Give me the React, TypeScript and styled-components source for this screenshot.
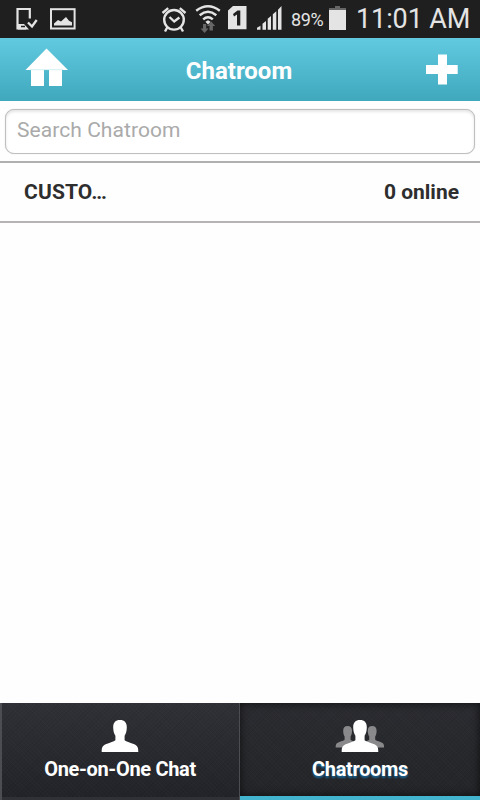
import React from "react";
import styled, { createGlobalStyle } from "styled-components";

const GlobalStyle = createGlobalStyle`
  * { box-sizing: border-box; }
  body { margin: 0; background: #fff; font-family: Roboto, sans-serif; }
`;

const Screen = styled.div`
  width: 480px;
  height: 800px;
  display: flex;
  flex-direction: column;
  overflow: hidden;
  background: #fefefe;
`;

const StatusBar = styled.div`
  height: 38px;
  flex: none;
  display: flex;
  justify-content: space-between;
  padding: 0 10px 0 14px;
  background: #1f1f1f;
  color: #e4e4e4;
`;

const StatusGroup = styled.div<{ $gap: number }>`
  display: flex;
  gap: ${(p) => p.$gap}px;
`;

const Glyph = styled.svg`
  display: block;
  flex: none;
  overflow: visible;
`;

const BatteryLevel = styled.span`
  width: 29px;
  font-size: 18px;
  line-height: 39px;
  letter-spacing: -0.35px;
  white-space: nowrap;
`;

const Clock = styled.span`
  width: 114px;
  margin-left: 1px;
  font-size: 27px;
  line-height: 38px;
  letter-spacing: -0.1px;
  white-space: nowrap;
`;

const Header = styled.header`
  height: 63px;
  flex: none;
  display: grid;
  grid-template-columns: 72px 1fr 72px;
  align-items: start;
  background: linear-gradient(#62cae0, #40a8bd);
  color: #fff;
`;

const Title = styled.h1`
  margin: 0;
  padding-right: 2px;
  text-align: center;
  font-size: 24px;
  font-weight: 700;
  line-height: 66px;
`;

const IconButton = styled.button`
  display: block;
  width: 72px;
  height: 63px;
  padding: 0;
  border: 0;
  background: none;
`;

const SearchArea = styled.div`
  flex: none;
  height: 60px;
  padding: 8px 5px 0;
`;

const SearchInput = styled.input`
  display: block;
  width: 470px;
  height: 45px;
  padding: 0 11px 3px;
  border: 1px solid #c0bebf;
  border-radius: 9px;
  outline: 0;
  background: #fff;
  box-shadow: inset 0 2px 3px #e6e6e6, 0 0 1px #c8c6c7;
  font: 400 21px Roboto, sans-serif;
  letter-spacing: 0.06px;
  &::placeholder { color: #aaa; opacity: 1; }
`;

const RoomList = styled.main`
  flex: 1;
  border-top: 2px solid #b0b0b0;
`;

const RoomRow = styled.div`
  height: 60px;
  display: flex;
  justify-content: space-between;
  padding: 0 21px 0 24px;
  border-bottom: 2px solid #b6b4b5;
  color: #2e2e2e;
  font-size: 21px;
  font-weight: 700;
  line-height: 58px;
`;

const RoomName = styled.span`
  width: 100px;
  letter-spacing: 0.15px;
`;

const OnlineCount = styled.span`
  white-space: nowrap;
`;

const TabBar = styled.nav`
  height: 97px;
  flex: none;
  display: grid;
  grid-template-columns: 1fr 1fr;
`;

const Tab = styled.button<{ $active?: boolean }>`
  display: flex;
  flex-direction: column;
  align-items: center;
  padding: ${(p) => (p.$active ? "16px 0 0" : "16px 1px 0 0")};
  border: 0 solid #4c4d52;
  border-width: ${(p) => (p.$active ? "0 0 4px" : "0 1px 0 2px")};
  border-bottom-color: #43b4cd;
  background:
    repeating-linear-gradient(45deg, rgba(255, 255, 255, 0.012) 0 1px, transparent 1px 3px),
    repeating-linear-gradient(-45deg, rgba(0, 0, 0, 0.06) 0 1px, transparent 1px 3px),
    linear-gradient(${(p) => (p.$active ? "#2b2c31, #242528" : "#303137, #222328")});
  box-shadow: ${(p) =>
    p.$active ? "inset 0 0 9px rgba(0, 0, 0, 0.65)" : "inset 0 -3px 0 #303137"};
  color: #fff;
`;

const TabLabel = styled.span<{ $glow?: boolean }>`
  margin-top: 2px;
  font: 700 20px/28px Roboto, sans-serif;
  letter-spacing: -0.33px;
  text-shadow: ${(p) => (p.$glow ? "0 2px 2px #17679a" : "none")};
`;

const bust =
  "M24 1C19.5 1 17.1 3.6 17.2 8.5c.1 4 1 6.5 2.2 8.2v4.6c-1.8 1.4-5 2.1-9 3.7C6.5 26.6 5.7 28 5.7 33h36.6c0-5-.8-6.4-4.7-8-4-1.6-7.2-2.3-9-3.7v-4.6c1.2-1.7 2.1-4.2 2.2-8.2C30.9 3.6 28.5 1 24 1Z";

function DeviceCheckIcon() {
  return (
    <Glyph width="26" height="38">
      <path d="M3.5 28V9h12.3v9.5M3.5 26V28.5H12" fill="none" stroke="#e4e4e4" strokeWidth="2.2" />
      <path d="M4 24h6l5 5.5H4Z" fill="#e4e4e4" />
      <path d="M7 26.5h4" stroke="#1f1f1f" strokeWidth="1.5" />
      <path d="m14 22.5 4 4 4.7-6.5" fill="none" stroke="#e4e4e4" strokeWidth="2.3" />
    </Glyph>
  );
}

function PictureIcon() {
  return (
    <Glyph width="28" height="38">
      <rect x="2" y="9.2" width="23.6" height="19.3" fill="none" stroke="#e4e4e4" strokeWidth="2" />
      <path d="M5 25.5v-2l4-3.5 3 1.5 5-4.5 3 3.7 3 1.6v3.2Z" fill="#e4e4e4" />
    </Glyph>
  );
}

function AlarmIcon() {
  return (
    <Glyph width="26" height="38">
      <g fill="none" stroke="#e4e4e4" strokeWidth="2.4">
        <circle cx="13" cy="19.8" r="9.8" />
        <path d="M1.5 13 7.2 8.2M24.5 13l-5.7-4.8M6.5 27 4 31.5M19.5 27l2.5 4.5M8.5 17l4.7 4.5 5.2-4" />
      </g>
    </Glyph>
  );
}

function WifiIcon() {
  return (
    <Glyph width="24" height="38">
      <g fill="none" stroke="#e4e4e4" strokeWidth="2.5">
        <path d="M1.2 10.7q11.8-9 23.6 0M4.7 15.2q8.3-6.8 16.6 0M8.2 19.4q4.8-4.2 9.6 0" />
      </g>
      <path d="m10.4 21.8 2.6-1.5 2.6 1.5-2.6 2.8Z" fill="#e4e4e4" />
      <path d="M8 24h3.2v4.5h2.3L9.6 33l-4-4.5H8ZM14.5 30.5V26H12l4.2-4.5 4 4.5h-2.3v4.5Z" fill="#666" />
    </Glyph>
  );
}

function SimIcon() {
  return (
    <Glyph width="21" height="38">
      <path d="M1 10.5 6 6h13.5v23.3H1Z" fill="#e4e4e4" />
      <path d="m6 14 4.5-3.5h2.8v15H10V14.5L7 16.5Z" fill="#1f1f1f" />
    </Glyph>
  );
}

function SignalIcon() {
  return (
    <Glyph width="27" height="38">
      <path d="M1 29.7v-2l3.5-2v4ZM6.5 29.7v-6L10 21v8.7ZM11.7 29.7v-11L15 16v13.7ZM16.8 29.7V14.2l3.5-3v18.5ZM22 29.7v-20L25.5 6v23.7Z" fill="#e4e4e4" />
    </Glyph>
  );
}

function BatteryIcon() {
  return (
    <Glyph width="19" height="38">
      <path d="M1 10V8h6V6h5v2h6v2Z" fill="#666" />
      <path d="M1 10h17v20H1Z" fill="#e4e4e4" />
    </Glyph>
  );
}

export default function App() {
  return (
    <>
      <GlobalStyle />
      <Screen>
        <StatusBar>
          <StatusGroup $gap={9}>
            <DeviceCheckIcon />
            <PictureIcon />
          </StatusGroup>
          <StatusGroup $gap={8}>
            <AlarmIcon />
            <WifiIcon />
            <SimIcon />
            <SignalIcon />
            <BatteryLevel>89%</BatteryLevel>
            <BatteryIcon />
            <Clock>11:01 AM</Clock>
          </StatusGroup>
        </StatusBar>
        <Header>
          <IconButton aria-label="Home">
            <Glyph width="72" height="63">
              <path d="M46.5 10.5 68 32H62v16H49V32h-5v16H31V32h-5.5Z" fill="#fff" />
              <path d="M30 31.7h33" stroke="#b5e4ed" strokeWidth=".6" />
            </Glyph>
          </IconButton>
          <Title>Chatroom</Title>
          <IconButton aria-label="Add chatroom">
            <Glyph width="72" height="63">
              <path d="M30 16.5h9v10.5h10.7v9H39v10.5h-9V36H18v-9h12Z" fill="#fff" />
            </Glyph>
          </IconButton>
        </Header>
        <SearchArea>
          <SearchInput placeholder="Search Chatroom" />
        </SearchArea>
        <RoomList>
          <RoomRow>
            <RoomName>CUSTO…</RoomName>
            <OnlineCount>0 online</OnlineCount>
          </RoomRow>
        </RoomList>
        <TabBar>
          <Tab>
            <Glyph width="48" height="34">
              <path d={bust} fill="#fff" />
            </Glyph>
            <TabLabel>One-on-One Chat</TabLabel>
          </Tab>
          <Tab $active>
            <Glyph width="48" height="34">
              <path d={bust} fill="#89898b" transform="translate(-4 6.4) scale(.65 .67)" />
              <path d={bust} fill="#89898b" transform="translate(20.6 6.4) scale(.65 .67)" />
              <path d={bust} fill="#fff" />
            </Glyph>
            <TabLabel $glow>Chatrooms</TabLabel>
          </Tab>
        </TabBar>
      </Screen>
    </>
  );
}
